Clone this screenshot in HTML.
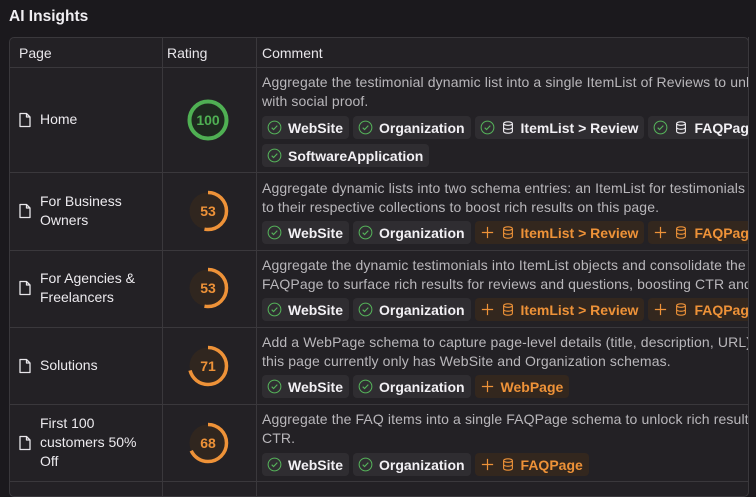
<!DOCTYPE html>
<html><head><meta charset="utf-8"><style>
*{box-sizing:border-box;margin:0;padding:0}
body{width:756px;height:484px;overflow:hidden;background:#1b191d;font-family:"Liberation Sans",sans-serif;color:#e8e6ea;position:relative}
h1{position:absolute;left:9px;top:8px;font-size:15.5px;font-weight:bold;color:#f0eef2}
.tbl{position:absolute;left:9px;top:37px;width:740px;height:460px;border:1px solid #3a383c;border-radius:5px;background:#232125;overflow:hidden}
.hl{position:absolute;left:0;right:0;height:1px;background:#3a383c}
.vl{position:absolute;top:0;bottom:0;width:1px;background:#3a383c}
.th{position:absolute;top:7px;font-size:14px;color:#e8e6ea}
.page{position:absolute;left:9px;display:flex;align-items:center;gap:8px;font-size:14px;line-height:19px;color:#eceaee}
.page svg{flex:none}
.ring{position:absolute;left:176px;width:44px;height:44px}
.cm{position:absolute;left:252px;width:600px;font-size:14px;line-height:19px;color:#b9b7bb;white-space:nowrap;letter-spacing:0.12px}
.bs{position:absolute;left:252px;display:flex;gap:4px;white-space:nowrap;width:700px}
.b{height:23px;display:flex;align-items:center;gap:6px;padding:0 6px 0 5px;border-radius:4px;background:#2f2d31;font-weight:bold;font-size:14px;color:#f2f0f4}
.b.o{background:#33271e;color:#ee9238}
</style></head><body>
<h1>AI Insights</h1>
<div class="tbl">
<div class="th" style="left:9px">Page</div>
<div class="th" style="left:157px">Rating</div>
<div class="th" style="left:252px">Comment</div>
<div class="vl" style="left:152px"></div>
<div class="vl" style="left:246px"></div>
<div class="hl" style="top:29px"></div>
<div class="hl" style="top:134px"></div>
<div class="hl" style="top:212px"></div>
<div class="hl" style="top:289px"></div>
<div class="hl" style="top:366px"></div>
<div class="hl" style="top:443px"></div>
</div>
<svg width="0" height="0" style="position:absolute"><defs>
<symbol id="doc" viewBox="0 0 14 16"><path d="M2 1.5h6.5l3.5 3.5v9.5H2z M8.5 1.5V5H12" fill="none" stroke="#e8e6ea" stroke-width="1.3" stroke-linejoin="round"/></symbol>
<symbol id="chk" viewBox="0 0 16 16"><circle cx="8" cy="8" r="6.8" fill="none" stroke="#55b25a" stroke-width="1.1"/><path d="M5 8.2l2 2 4-4.2" fill="none" stroke="#55b25a" stroke-width="1.2"/></symbol>
<symbol id="plus" viewBox="0 0 16 16"><path d="M8 2v12M2 8h12" stroke="#ee9238" stroke-width="1.3"/></symbol>
<symbol id="db" viewBox="0 0 16 16"><g fill="none" stroke="#ee9238" stroke-width="1.3"><ellipse cx="8" cy="3.5" rx="5" ry="2"/><path d="M3 3.5v9c0 1.1 2.2 2 5 2s5-.9 5-2v-9M3 8c0 1.1 2.2 2 5 2s5-.9 5-2"/></g></symbol>
<symbol id="dbw" viewBox="0 0 16 16"><g fill="none" stroke="#f2f0f4" stroke-width="1.3"><ellipse cx="8" cy="3.5" rx="5" ry="2"/><path d="M3 3.5v9c0 1.1 2.2 2 5 2s5-.9 5-2v-9M3 8c0 1.1 2.2 2 5 2s5-.9 5-2"/></g></symbol>
</defs></svg>

<!-- row1 -->
<div class="page" style="top:110px;left:18px"><svg width="14" height="16"><use href="#doc"/></svg><span>Home</span></div>
<svg class="ring" style="top:98px;left:186px" viewBox="0 0 44 44"><circle cx="22" cy="22" r="18.5" fill="#1e2a1f" stroke="#4fb053" stroke-width="4"/><text x="22" y="27" text-anchor="middle" font-family="Liberation Sans" font-weight="bold" font-size="14" fill="#4fb053">100</text></svg>
<div class="cm" style="top:73px;left:262px">Aggregate the testimonial dynamic list into a single ItemList of Reviews to unlock<br>with social proof.</div>
<div class="bs" style="top:116px;left:262px"><div class="b"><svg width="15" height="15"><use href="#chk"/></svg>WebSite</div><div class="b"><svg width="15" height="15"><use href="#chk"/></svg>Organization</div><div class="b"><svg width="15" height="15"><use href="#chk"/></svg><svg width="14" height="15"><use href="#dbw"/></svg>ItemList &gt; Review</div><div class="b"><svg width="15" height="15"><use href="#chk"/></svg><svg width="14" height="15"><use href="#dbw"/></svg>FAQPage</div></div>
<div class="bs" style="top:144px;left:262px"><div class="b"><svg width="15" height="15"><use href="#chk"/></svg>SoftwareApplication</div></div>

<!-- row2 -->
<div class="page" style="top:192px;left:18px"><svg width="14" height="16"><use href="#doc"/></svg><span>For Business<br>Owners</span></div>
<svg class="ring" style="top:189px;left:186px" viewBox="0 0 44 44"><circle cx="22" cy="22" r="18.5" fill="#30261f"/><circle cx="22" cy="22" r="18.5" fill="none" stroke="#ee9238" stroke-width="3.5" stroke-dasharray="61.6 200" transform="rotate(-90 22 22)"/><text x="22" y="27" text-anchor="middle" font-family="Liberation Sans" font-weight="bold" font-size="14" fill="#ee9238">53</text></svg>
<div class="cm" style="top:179px;left:262px">Aggregate dynamic lists into two schema entries: an ItemList for testimonials and<br>to their respective collections to boost rich results on this page.</div>
<div class="bs" style="top:221px;left:262px"><div class="b"><svg width="15" height="15"><use href="#chk"/></svg>WebSite</div><div class="b"><svg width="15" height="15"><use href="#chk"/></svg>Organization</div><div class="b o"><svg width="15" height="15"><use href="#plus"/></svg><svg width="14" height="15"><use href="#db"/></svg>ItemList &gt; Review</div><div class="b o"><svg width="15" height="15"><use href="#plus"/></svg><svg width="14" height="15"><use href="#db"/></svg>FAQPage</div></div>

<!-- row3 -->
<div class="page" style="top:269px;left:18px"><svg width="14" height="16"><use href="#doc"/></svg><span>For Agencies &amp;<br>Freelancers</span></div>
<svg class="ring" style="top:266px;left:186px" viewBox="0 0 44 44"><circle cx="22" cy="22" r="18.5" fill="#30261f"/><circle cx="22" cy="22" r="18.5" fill="none" stroke="#ee9238" stroke-width="3.5" stroke-dasharray="61.6 200" transform="rotate(-90 22 22)"/><text x="22" y="27" text-anchor="middle" font-family="Liberation Sans" font-weight="bold" font-size="14" fill="#ee9238">53</text></svg>
<div class="cm" style="top:256px;left:262px">Aggregate the dynamic testimonials into ItemList objects and consolidate the FAQ<br>FAQPage to surface rich results for reviews and questions, boosting CTR and</div>
<div class="bs" style="top:298px;left:262px"><div class="b"><svg width="15" height="15"><use href="#chk"/></svg>WebSite</div><div class="b"><svg width="15" height="15"><use href="#chk"/></svg>Organization</div><div class="b o"><svg width="15" height="15"><use href="#plus"/></svg><svg width="14" height="15"><use href="#db"/></svg>ItemList &gt; Review</div><div class="b o"><svg width="15" height="15"><use href="#plus"/></svg><svg width="14" height="15"><use href="#db"/></svg>FAQPage</div></div>

<!-- row4 -->
<div class="page" style="top:356px;left:18px"><svg width="14" height="16"><use href="#doc"/></svg><span>Solutions</span></div>
<svg class="ring" style="top:344px;left:186px" viewBox="0 0 44 44"><circle cx="22" cy="22" r="18.5" fill="#30261f"/><circle cx="22" cy="22" r="18.5" fill="none" stroke="#ee9238" stroke-width="3.5" stroke-dasharray="82.5 200" transform="rotate(-90 22 22)"/><text x="22" y="27" text-anchor="middle" font-family="Liberation Sans" font-weight="bold" font-size="14" fill="#ee9238">71</text></svg>
<div class="cm" style="top:333px;left:262px">Add a WebPage schema to capture page-level details (title, description, URL) since<br>this page currently only has WebSite and Organization schemas.</div>
<div class="bs" style="top:375px;left:262px"><div class="b"><svg width="15" height="15"><use href="#chk"/></svg>WebSite</div><div class="b"><svg width="15" height="15"><use href="#chk"/></svg>Organization</div><div class="b o"><svg width="15" height="15"><use href="#plus"/></svg>WebPage</div></div>

<!-- row5 -->
<div class="page" style="top:414px;left:18px"><svg width="14" height="16"><use href="#doc"/></svg><span>First 100<br>customers 50%<br>Off</span></div>
<svg class="ring" style="top:421px;left:186px" viewBox="0 0 44 44"><circle cx="22" cy="22" r="18.5" fill="#30261f"/><circle cx="22" cy="22" r="18.5" fill="none" stroke="#ee9238" stroke-width="3.5" stroke-dasharray="79 200" transform="rotate(-90 22 22)"/><text x="22" y="27" text-anchor="middle" font-family="Liberation Sans" font-weight="bold" font-size="14" fill="#ee9238">68</text></svg>
<div class="cm" style="top:410px;left:262px">Aggregate the FAQ items into a single FAQPage schema to unlock rich results and<br>CTR.</div>
<div class="bs" style="top:453px;left:262px"><div class="b"><svg width="15" height="15"><use href="#chk"/></svg>WebSite</div><div class="b"><svg width="15" height="15"><use href="#chk"/></svg>Organization</div><div class="b o"><svg width="15" height="15"><use href="#plus"/></svg><svg width="14" height="15"><use href="#db"/></svg>FAQPage</div></div>

<div style="position:absolute;left:749px;top:0;width:7px;height:484px;background:#1b191d"></div>
<div style="position:absolute;left:748px;top:37px;width:1px;height:447px;background:#3a383c"></div>
</body></html>
